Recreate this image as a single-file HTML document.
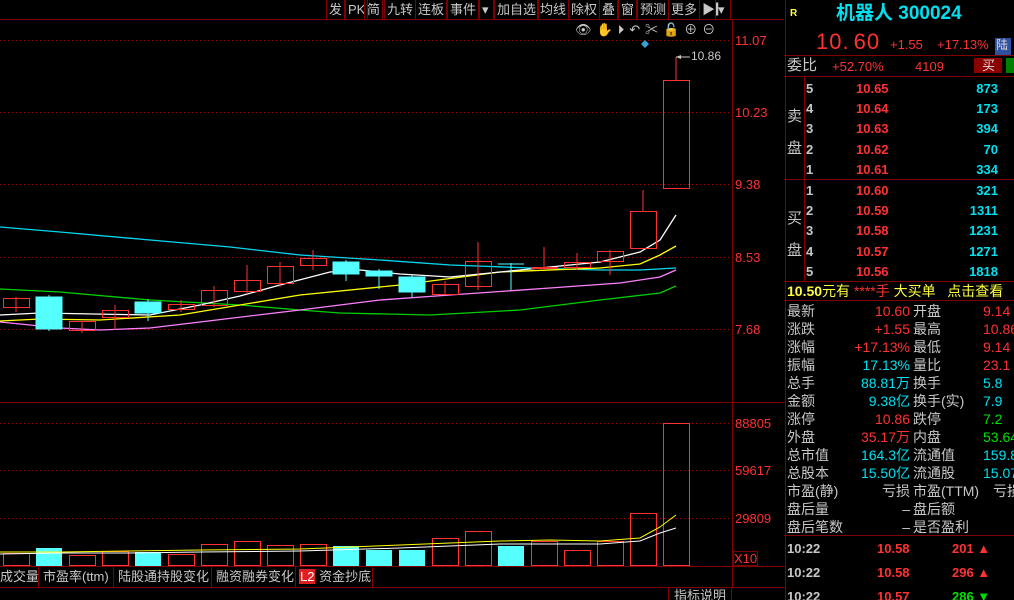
<!DOCTYPE html>
<html><head><meta charset="utf-8"><style>
*{margin:0;padding:0;box-sizing:border-box}
html,body{width:1014px;height:600px;overflow:hidden}
body{background:#000;position:relative;font-family:"Liberation Sans","Noto Sans CJK SC",sans-serif;}
span{white-space:nowrap}
.a{position:absolute;white-space:nowrap;line-height:1}
.r{color:#ff3232}.c{color:#00e0f0}.g{color:#c8c8c8}.gr{color:#00e000}.y{color:#ffff40}
.tb{position:absolute;top:0;height:19px;border-right:1px solid #800000;border-left:1px solid #800000;color:#c8c8c8;font-size:13px;line-height:19px;padding:0 2px}
</style></head><body>
<svg width="1014" height="600" style="position:absolute;left:0;top:0">
<g stroke="#800000" fill="none">
<line x1="0" y1="19.5" x2="784" y2="19.5"/>
<line x1="732.5" y1="19" x2="732.5" y2="587"/>
<line x1="785.5" y1="0" x2="785.5" y2="600"/>
<line x1="0" y1="402.5" x2="785" y2="402.5"/>
<line x1="0" y1="566.5" x2="785" y2="566.5"/>
<line x1="0" y1="587.5" x2="785" y2="587.5"/>
<line x1="668.5" y1="588" x2="668.5" y2="600"/>
<line x1="731.5" y1="588" x2="731.5" y2="600"/>
</g>
<g stroke="#a00000" stroke-dasharray="1,3">
<line x1="0" y1="40.5" x2="732" y2="40.5"/><line x1="0" y1="112.5" x2="732" y2="112.5"/>
<line x1="0" y1="184.5" x2="732" y2="184.5"/><line x1="0" y1="257.5" x2="732" y2="257.5"/>
<line x1="0" y1="329.5" x2="732" y2="329.5"/>
<line x1="0" y1="423.5" x2="732" y2="423.5"/><line x1="0" y1="470.5" x2="732" y2="470.5"/>
<line x1="0" y1="518.5" x2="732" y2="518.5"/>
</g>
<g fill="none" stroke-width="1.3">
<polyline stroke="#00d8f0" points="0,227 60,232 150,240 230,247 300,255 380,260 450,265 530,268 600,270 640,270 676,268"/>
<polyline stroke="#00d000" points="0,289 60,292 150,300 240,305 300,310 340,313 430,315 520,310 600,300 660,293 676,286"/>
<polyline stroke="#ff80ff" points="0,322 60,328 100,330 150,328 200,322 300,310 380,300 450,295 550,288 620,283 660,277 676,270"/>
<polyline stroke="#ffff00" points="0,321 40,319 100,320 180,315 240,305 300,295 400,285 500,272 600,268 640,264 660,255 676,246"/>
<polyline stroke="#ffffff" points="0,315 40,313 150,315 200,305 240,296 280,285 330,272 360,270 400,274 450,277 520,270 600,262 640,252 660,240 676,215"/>
</g>
<g stroke="#ff3232" fill="none">
<line x1="16" y1="297" x2="16" y2="312"/><rect x="3.5" y="298.5" width="26" height="9"/>
<line x1="82" y1="321" x2="82" y2="333"/><rect x="69.5" y="321.5" width="26" height="9"/>
<line x1="115" y1="305" x2="115" y2="330"/><rect x="102.5" y="310.5" width="26" height="7"/>
<line x1="181" y1="300" x2="181" y2="312"/><rect x="168.5" y="304.5" width="26" height="5"/>
<line x1="214" y1="286" x2="214" y2="307"/><rect x="201.5" y="290.5" width="26" height="15"/>
<line x1="247" y1="265" x2="247" y2="294"/><rect x="234.5" y="280.5" width="26" height="11"/>
<line x1="280" y1="262" x2="280" y2="287"/><rect x="267.5" y="266.5" width="26" height="17"/>
<line x1="313" y1="250" x2="313" y2="270"/><rect x="300.5" y="258.5" width="26" height="7"/>
<line x1="445" y1="281" x2="445" y2="294"/><rect x="432.5" y="284.5" width="26" height="10"/>
<line x1="478" y1="242" x2="478" y2="290"/><rect x="465.5" y="261.5" width="26" height="25"/>
<line x1="544" y1="247" x2="544" y2="270"/><rect x="531.5" y="267.5" width="26" height="1"/>
<line x1="577" y1="253" x2="577" y2="270"/><rect x="564.5" y="262.5" width="26" height="5"/>
<line x1="610" y1="250" x2="610" y2="275"/><rect x="597.5" y="251.5" width="26" height="10"/>
<line x1="643" y1="190" x2="643" y2="211"/><rect x="630.5" y="211.5" width="26" height="37"/>
<line x1="676" y1="57" x2="676" y2="80"/><rect x="663.5" y="80.5" width="26" height="108"/>
</g>
<g fill="#55ffff" stroke="#55ffff">
<line x1="49" y1="295" x2="49" y2="331"/><rect x="36" y="297" width="26" height="32"/>
<line x1="148" y1="299" x2="148" y2="321"/><rect x="135" y="302" width="26" height="11"/>
<line x1="346" y1="260" x2="346" y2="281"/><rect x="333" y="262" width="26" height="12"/>
<line x1="379" y1="269" x2="379" y2="289"/><rect x="366" y="271" width="26" height="5"/>
<line x1="412" y1="275" x2="412" y2="297"/><rect x="399" y="277" width="26" height="15"/>
<line x1="511" y1="263" x2="511" y2="290"/><line x1="498" y1="264" x2="524" y2="264"/>
</g>
<polyline points="676,57 690,57" stroke="#c8c8c8"/><polygon points="676,57 681,55 681,59" fill="#c8c8c8"/>
<polygon points="645,40 649,44 645,48 641,44" fill="#3aa0d8"/>
<g stroke="#ff3232" fill="none">
<rect x="3.5" y="553.5" width="26" height="12"/><rect x="69.5" y="555.5" width="26" height="10"/>
<rect x="102.5" y="551.5" width="26" height="14"/><rect x="168.5" y="554.5" width="26" height="11"/>
<rect x="201.5" y="544.5" width="26" height="21"/><rect x="234.5" y="541.5" width="26" height="24"/>
<rect x="267.5" y="545.5" width="26" height="20"/><rect x="300.5" y="544.5" width="26" height="21"/>
<rect x="432.5" y="538.5" width="26" height="27"/><rect x="465.5" y="531.5" width="26" height="34"/>
<rect x="531.5" y="541.5" width="26" height="24"/><rect x="564.5" y="550.5" width="26" height="15"/>
<rect x="597.5" y="541.5" width="26" height="24"/><rect x="630.5" y="513.5" width="26" height="52"/>
<rect x="663.5" y="423.5" width="26" height="142"/>
</g>
<g fill="#55ffff">
<rect x="36" y="548" width="26" height="18"/><rect x="135" y="552" width="26" height="14"/>
<rect x="333" y="546" width="26" height="20"/><rect x="366" y="550" width="26" height="16"/>
<rect x="399" y="550" width="26" height="16"/><rect x="498" y="546" width="26" height="20"/>
</g>
<polyline fill="none" stroke="#ffff00" points="0,552 60,552 130,551 200,550 300,549 400,545 500,541 550,540 600,541 640,538 660,527 676,515"/>
<polyline fill="none" stroke="#ffffff" points="0,554 60,553 130,553 200,552 300,551 400,548 500,544 600,544 640,541 660,533 676,528"/>
</svg>

<div class="tb" style="left:326px">发</div><div class="tb" style="left:345px">PK</div><div class="tb" style="left:364px">简</div>
<div class="tb" style="left:384px">九转</div><div class="tb" style="left:415px">连板</div><div class="tb" style="left:447px">事件</div>
<div class="tb" style="left:479px;width:15px">▾</div>
<div class="tb" style="left:494px">加自选</div><div class="tb" style="left:537px">均线</div><div class="tb" style="left:568px">除权</div>
<div class="tb" style="left:599px">叠</div><div class="tb" style="left:618px">窗</div><div class="tb" style="left:637px">预测</div>
<div class="tb" style="left:668px">更多</div><div class="tb" style="left:699px">▶▎</div><div class="tb" style="left:715px;width:16px">▾</div>
<div class="a g" style="left:575px;top:23px;font-size:13px;letter-spacing:5px">👁✋⏵↶✂🔓⊕⊖</div>
<div class="a r" style="left:735px;top:34px;font-size:13px">11.07</div>
<div class="a r" style="left:735px;top:106px;font-size:13px">10.23</div>
<div class="a r" style="left:735px;top:178px;font-size:13px">9.38</div>
<div class="a r" style="left:735px;top:251px;font-size:13px">8.53</div>
<div class="a r" style="left:735px;top:323px;font-size:13px">7.68</div>
<div class="a r" style="left:735px;top:417px;font-size:13px">88805</div>
<div class="a r" style="left:735px;top:464px;font-size:13px">59617</div>
<div class="a r" style="left:735px;top:512px;font-size:13px">29809</div>
<div class="a r" style="left:733px;top:551px;font-size:13px;border:1px solid #800000">X10</div>
<div class="a g" style="left:691px;top:50px;font-size:12px">10.86</div>
<div class="a g" style="left:0;top:570px;font-size:13px">成交量</div>
<div class="a g" style="left:43px;top:570px;font-size:13px">市盈率(ttm)</div>
<div class="a g" style="left:118px;top:570px;font-size:13px">陆股通持股变化</div>
<div class="a g" style="left:216px;top:570px;font-size:13px">融资融券变化</div>
<div class="a g" style="left:299px;top:570px;font-size:13px"><span style="background:#e02020;color:#fff;padding:0 1px">L2</span> 资金抄底</div>
<svg width="400" height="22" style="position:absolute;left:0;top:566px"><g stroke="#800000"><line x1="38.5" y1="0" x2="38.5" y2="21"/><line x1="113.5" y1="0" x2="113.5" y2="21"/><line x1="211.5" y1="0" x2="211.5" y2="21"/><line x1="295.5" y1="0" x2="295.5" y2="21"/><line x1="372.5" y1="0" x2="372.5" y2="21"/></g></svg>
<div class="a g" style="left:674px;top:589px;font-size:13px">指标说明</div>

<svg width="230" height="600" style="position:absolute;left:784px;top:0">
<g stroke="#800000"><line x1="0" y1="55.5" x2="230" y2="55.5"/><line x1="0" y1="76.5" x2="230" y2="76.5"/>
<line x1="0" y1="179.5" x2="230" y2="179.5"/><line x1="0" y1="281.5" x2="230" y2="281.5"/>
<line x1="0" y1="300.5" x2="230" y2="300.5"/><line x1="0" y1="535.5" x2="230" y2="535.5"/>
<line x1="20.5" y1="77" x2="20.5" y2="281"/></g>
<rect x="190" y="58" width="28" height="15" fill="#8b0000"/><rect x="222" y="58" width="10" height="15" fill="#008000"/>
<rect x="211" y="38" width="16" height="17" fill="#3050a0"/>
</svg>
<div class="a y" style="left:790px;top:9px;font-size:10px;font-weight:bold">R</div>
<div class="a c" style="left:836px;top:4px;font-size:19px;font-weight:bold">机器人 300024</div>
<div class="a r" style="left:816px;top:31px;font-size:22px;letter-spacing:1px">10.<span style="margin-left:4px">60</span></div>
<div class="a r" style="left:890px;top:38px;font-size:13px">+1.55</div>
<div class="a r" style="left:937px;top:38px;font-size:13px">+17.13%</div>
<div class="a" style="left:996px;top:39px;font-size:12px;color:#ddd">陆</div>
<div class="a g" style="left:787px;top:58px;font-size:15px">委比</div>
<div class="a r" style="left:832px;top:60px;font-size:13px">+52.70%</div>
<div class="a r" style="left:915px;top:60px;font-size:13px">4109</div>
<div class="a" style="left:982px;top:59px;font-size:13px;color:#ddd">买</div>
<div class="a g" style="left:787px;top:101px;font-size:15px;line-height:32px;width:16px;white-space:normal">卖 盘</div>
<div class="a g" style="left:787px;top:203px;font-size:15px;line-height:32px;width:16px;white-space:normal">买 盘</div>
<div style="position:absolute;left:806px;top:79px;width:192px;font-size:13px;line-height:20.2px;font-weight:bold">
<div style="display:flex"><span class="g" style="width:50px">5</span><span class="r" style="width:80px">10.65</span><span class="c" style="flex:1;text-align:right">873</span></div>
<div style="display:flex"><span class="g" style="width:50px">4</span><span class="r" style="width:80px">10.64</span><span class="c" style="flex:1;text-align:right">173</span></div>
<div style="display:flex"><span class="g" style="width:50px">3</span><span class="r" style="width:80px">10.63</span><span class="c" style="flex:1;text-align:right">394</span></div>
<div style="display:flex"><span class="g" style="width:50px">2</span><span class="r" style="width:80px">10.62</span><span class="c" style="flex:1;text-align:right">70</span></div>
<div style="display:flex"><span class="g" style="width:50px">1</span><span class="r" style="width:80px">10.61</span><span class="c" style="flex:1;text-align:right">334</span></div>
<div style="height:1px"></div>
<div style="display:flex"><span class="g" style="width:50px">1</span><span class="r" style="width:80px">10.60</span><span class="c" style="flex:1;text-align:right">321</span></div>
<div style="display:flex"><span class="g" style="width:50px">2</span><span class="r" style="width:80px">10.59</span><span class="c" style="flex:1;text-align:right">1311</span></div>
<div style="display:flex"><span class="g" style="width:50px">3</span><span class="r" style="width:80px">10.58</span><span class="c" style="flex:1;text-align:right">1231</span></div>
<div style="display:flex"><span class="g" style="width:50px">4</span><span class="r" style="width:80px">10.57</span><span class="c" style="flex:1;text-align:right">1271</span></div>
<div style="display:flex"><span class="g" style="width:50px">5</span><span class="r" style="width:80px">10.56</span><span class="c" style="flex:1;text-align:right">1818</span></div>
</div>
<div class="a y" style="left:787px;top:284px;font-size:14px"><b>10.50</b>元有 <span class="r">****手</span> 大买单 &nbsp;&nbsp;点击查看</div>
<div style="position:absolute;left:787px;top:302px;width:240px;font-size:14px;line-height:18px;white-space:nowrap">
<div style="display:flex"><span class="g" style="width:48px">最新</span><span class="r" style="width:75px;text-align:right">10.60</span><span class="g" style="width:70px;margin-left:3px">开盘</span><span class="r">9.14</span></div>
<div style="display:flex"><span class="g" style="width:48px">涨跌</span><span class="r" style="width:75px;text-align:right">+1.55</span><span class="g" style="width:70px;margin-left:3px">最高</span><span class="r">10.86</span></div>
<div style="display:flex"><span class="g" style="width:48px">涨幅</span><span class="r" style="width:75px;text-align:right">+17.13%</span><span class="g" style="width:70px;margin-left:3px">最低</span><span class="r">9.14</span></div>
<div style="display:flex"><span class="g" style="width:48px">振幅</span><span class="c" style="width:75px;text-align:right">17.13%</span><span class="g" style="width:70px;margin-left:3px">量比</span><span class="r">23.1</span></div>
<div style="display:flex"><span class="g" style="width:48px">总手</span><span class="c" style="width:75px;text-align:right">88.81万</span><span class="g" style="width:70px;margin-left:3px">换手</span><span class="c">5.8</span></div>
<div style="display:flex"><span class="g" style="width:48px">金额</span><span class="c" style="width:75px;text-align:right">9.38亿</span><span class="g" style="width:70px;margin-left:3px">换手(实)</span><span class="c">7.9</span></div>
<div style="display:flex"><span class="g" style="width:48px">涨停</span><span class="r" style="width:75px;text-align:right">10.86</span><span class="g" style="width:70px;margin-left:3px">跌停</span><span class="gr">7.2</span></div>
<div style="display:flex"><span class="g" style="width:48px">外盘</span><span class="r" style="width:75px;text-align:right">35.17万</span><span class="g" style="width:70px;margin-left:3px">内盘</span><span class="gr">53.64</span></div>
<div style="display:flex"><span class="g" style="width:48px">总市值</span><span class="c" style="width:75px;text-align:right">164.3亿</span><span class="g" style="width:70px;margin-left:3px">流通值</span><span class="c">159.8</span></div>
<div style="display:flex"><span class="g" style="width:48px">总股本</span><span class="c" style="width:75px;text-align:right">15.50亿</span><span class="g" style="width:70px;margin-left:3px">流通股</span><span class="c">15.07</span></div>
<div style="display:flex"><span class="g" style="width:62px">市盈(静)</span><span class="g" style="width:61px;text-align:right">亏损</span><span class="g" style="width:80px;margin-left:3px">市盈(TTM)</span><span class="g">亏损</span></div>
<div style="display:flex"><span class="g" style="width:48px">盘后量</span><span class="g" style="width:75px;text-align:right">–</span><span class="g" style="width:70px;margin-left:3px">盘后额</span></div>
<div style="display:flex"><span class="g" style="width:62px">盘后笔数</span><span class="g" style="width:61px;text-align:right">–</span><span class="g" style="width:70px;margin-left:3px">是否盈利</span></div>
</div>
<div style="position:absolute;left:787px;top:537px;width:220px;font-size:13px;line-height:24px;font-weight:bold">
<div style="display:flex"><span class="g" style="width:90px">10:22</span><span class="r" style="width:75px">10.58</span><span class="r">201 ▲</span></div>
<div style="display:flex"><span class="g" style="width:90px">10:22</span><span class="r" style="width:75px">10.58</span><span class="r">296 ▲</span></div>
<div style="display:flex"><span class="g" style="width:90px">10:22</span><span class="r" style="width:75px">10.57</span><span class="gr">286 ▼</span></div>
</div>
</body></html>
